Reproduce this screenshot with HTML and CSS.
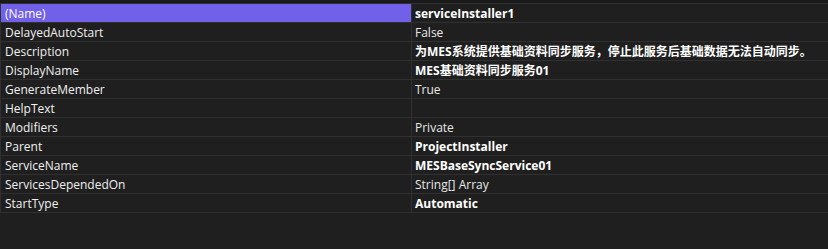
FILE: index.html
```html
<!DOCTYPE html>
<html>
<head>
<meta charset="utf-8">
<link rel="stylesheet" href="styles.css">
</head>
<body>
<div class="top"></div>
<div class="grid">
  <div class="row sel"><div class="name">(Name)</div><div class="val b">serviceInstaller1</div></div>
  <div class="row"><div class="name">DelayedAutoStart</div><div class="val">False</div></div>
  <div class="row"><div class="name">Description</div><div class="val b">为MES系统提供基础资料同步服务，停止此服务后基础数据无法自动同步。</div></div>
  <div class="row"><div class="name">DisplayName</div><div class="val b">MES基础资料同步服务01</div></div>
  <div class="row"><div class="name">GenerateMember</div><div class="val">True</div></div>
  <div class="row"><div class="name">HelpText</div><div class="val"></div></div>
  <div class="row"><div class="name">Modifiers</div><div class="val">Private</div></div>
  <div class="row"><div class="name">Parent</div><div class="val b">ProjectInstaller</div></div>
  <div class="row"><div class="name">ServiceName</div><div class="val b">MESBaseSyncService01</div></div>
  <div class="row"><div class="name">ServicesDependedOn</div><div class="val">String[] Array</div></div>
  <div class="row"><div class="name">StartType</div><div class="val b">Automatic</div></div>
</div>
</body>
</html>
```
FILE: styles.css
```css
html, body {
  margin: 0;
  padding: 0;
  background: #1f1f1f;
  height: 100%;
}
body {
  font-family: "Open Sans", "Noto Sans CJK SC", sans-serif;
  font-size: 12px;
  color: #f0f0f0;
}
.top {
  height: 3px;
  background: #1a1a1a;
}
.grid {
  border-top: 1px solid #303030;
  border-left: 1px solid #303030;
}
.row {
  display: grid;
  grid-template-columns: 411px 1fr;
  height: 18px;
  border-bottom: 1px solid #303030;
}
.name {
  padding-left: 4px;
  padding-top: 1px;
  line-height: 17px;
  white-space: nowrap;
  border-right: 1px solid #303030;
}
.val {
  padding-left: 3px;
  padding-top: 1px;
  line-height: 17px;
  white-space: nowrap;
  overflow: hidden;
  color: #e8e8e8;
}
.val.b {
  font-weight: bold;
  color: #ffffff;
}
.sel .name {
  background: #7160e8;
  color: #ffffff;
}
```
